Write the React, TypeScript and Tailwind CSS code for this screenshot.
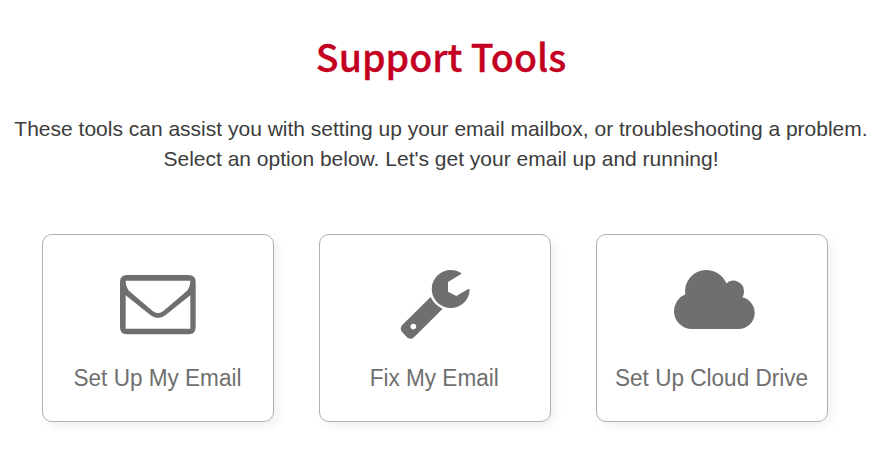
import type { ReactNode } from "react";

function EnvelopeIcon() {
  return (
    <svg width="95" height="80" viewBox="0 0 285 240" fill="#6f6f6f" aria-hidden="true">
      <path
        fillRule="evenodd"
        d="M51 30H236Q257 30 257 51V187Q257 208 236 208H51Q30 208 30 187V51Q30 30 51 30Z
           M47 47H241C241 61 236 74 226 82L160 138Q144 151 128 138L62 82C52 74 47 61 47 47Z
           M47 91V191H241V91L168 149Q144 169 120 149Z"
      />
    </svg>
  );
}

function WrenchIcon() {
  return (
    <svg width="90" height="90" viewBox="0 0 270 270" fill="#6f6f6f" aria-hidden="true">
      <path d="M213 39C215 41 214 42 212 43L174 66V95L199 108L235 87Q239 86 239 91A57 57 0 1 1 182 30Q200 30 213 39Z" />
      <path
        fillRule="evenodd"
        d="M122 111Q133 135 158 146L72 232Q62 241 51 232L37 217Q28 207 36 196Z M70 191A8.5 8.5 0 1 0 70 208A8.5 8.5 0 1 0 70 191Z"
      />
    </svg>
  );
}

function CloudIcon() {
  return (
    <svg width="100" height="80" viewBox="0 0 300 240" fill="#6f6f6f" aria-hidden="true">
      <path d="M81 207A54 54 0 0 1 27 153A54 54 0 0 1 61 103A63 63 0 0 1 123 30A65 65 0 0 1 184 70A32 32 0 0 1 237 95A32 32 0 0 1 232 112A48 48 0 0 1 269 159A48 48 0 0 1 221 207Z" />
    </svg>
  );
}

function ToolCard({ label, children }: { label: string; children: ReactNode }) {
  return (
    <a
      href="#"
      className="flex h-[188px] w-[232px] flex-col items-center rounded-[10px] border border-[#b0b0b0] bg-white shadow-[4px_4px_10px_rgba(0,0,0,0.06)]"
    >
      <span className="flex h-[126px] items-start">{children}</span>
      <span className="mr-px origin-center scale-x-[0.96] text-[23.5px] leading-[34px] whitespace-nowrap text-[#6f6f6f]">
        {label}
      </span>
    </a>
  );
}

export default function App() {
  return (
    <main className="h-[458px] w-[885px] overflow-hidden bg-white font-['Liberation_Sans',sans-serif]">
      <h1 className="w-[882px] pt-[28px] text-center font-['Noto_Sans_CJK_JP',sans-serif] text-[37.5px] leading-[56px] font-medium text-[#c40022] [-webkit-text-stroke:0.3px_#c40022]">
        Support Tools
      </h1>
      <p className="mt-[30px] w-[882px] text-center text-[21px] leading-[30px] whitespace-nowrap text-[#3c3c3c]">
        These tools can assist you with setting up your email mailbox, or troubleshooting a problem.
        <br />
        Select an option below. Let's get your email up and running!
      </p>
      <div className="mt-[60px] ml-[42px] flex gap-[45px]">
        <ToolCard label="Set Up My Email">
          <span className="mt-[30px] mr-[2px]">
            <EnvelopeIcon />
          </span>
        </ToolCard>
        <ToolCard label="Fix My Email">
          <span className="mt-[25px]">
            <WrenchIcon />
          </span>
        </ToolCard>
        <ToolCard label="Set Up Cloud Drive">
          <span className="mt-[25px] ml-[6px]">
            <CloudIcon />
          </span>
        </ToolCard>
      </div>
    </main>
  );
}
